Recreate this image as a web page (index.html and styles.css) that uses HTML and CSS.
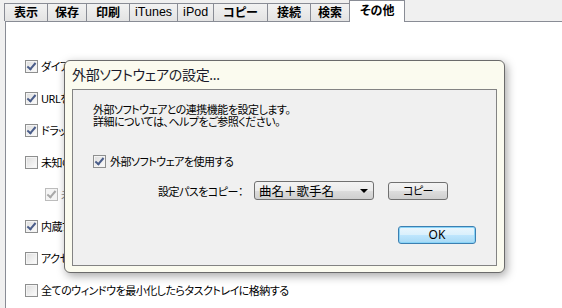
FILE: index.html
```html
<!DOCTYPE html>
<html lang="ja">

<head>
    <meta charset="UTF-8">
    <title>設定 - その他</title>
    <link rel="stylesheet" href="styles.css">
</head>

<body>
    <div class="window">
        <!-- Tab strip -->
        <div class="tabs">
            <div class="tab">表示</div>
            <div class="tab narrow">保存</div>
            <div class="tab">印刷</div>
            <div class="tab latin">iTunes</div>
            <div class="tab latin">iPod</div>
            <div class="tab">コピー</div>
            <div class="tab">接続</div>
            <div class="tab narrow">検索</div>
            <div class="tab active">その他</div>
        </div>

        <!-- Options page -->
        <div class="panel">
            <div class="row"><span class="check on"></span>ダイアログを常に手前に表示する</div>
            <div class="row"><span class="check on"></span>URLをクリックしたらブラウザで開く</div>
            <div class="row"><span class="check on"></span>ドラッグ＆ドロップで追加する</div>
            <div class="row"><span class="check"></span>未知のファイル形式も読み込む</div>
            <div class="row sub disabled"><span class="check on"></span>未対応の形式を確認する</div>
            <div class="row"><span class="check on"></span>内蔵プレーヤーで再生する</div>
            <div class="row"><span class="check"></span>アクセス履歴を保存する</div>
            <div class="row"><span class="check"></span>全てのウィンドウを最小化したらタスクトレイに格納する</div>
        </div>
    </div>

    <!-- Modal dialog -->
    <div class="dialog">
        <div class="dialog-title">外部ソフトウェアの設定...</div>
        <div class="dialog-body">
            <p class="intro">外部ソフトウェアとの連携機能を設定します。<br>詳細については、ヘルプをご参照ください。</p>
            <div class="use-row"><span class="check on"></span>外部ソフトウェアを使用する</div>
            <div class="path-row">
                <span class="path-label">設定パスをコピー：</span>
                <div class="combo">
                    <span>曲名＋歌手名</span>
                    <span class="arrow"></span>
                </div>
                <button class="btn">コピー</button>
            </div>
            <div class="ok-row">
                <button class="btn default">OK</button>
            </div>
        </div>
    </div>
</body>

</html>
```

FILE: styles.css
```css
/* General Styles */
body {
    margin: 0;
    width: 562px;
    height: 308px;
    overflow: hidden;
    background: #f0f0f0;
    font-family: "Noto Sans", "Noto Sans CJK JP", sans-serif;
    font-size: 11px;
    letter-spacing: -0.5px;
    font-feature-settings: "palt";
    color: #000;
    position: relative;
}

.window {
    height: 100%;
    display: flex;
    flex-direction: column;
}

/* Tabs */
.tabs {
    display: flex;
    align-items: flex-end;
    height: 21px;
    padding-left: 4px;
}

.tab {
    height: 18px;
    padding: 0 9px;
    margin-right: -1px;
    border: 1px solid #898c95;
    border-bottom: none;
    background: linear-gradient(to bottom, #f2f2f2, #e3e3e3);
    font-size: 12px;
    font-weight: bold;
    letter-spacing: 0;
    line-height: 17px;
    box-sizing: border-box;
    white-space: nowrap;
}

.tab.narrow {
    padding: 0 7px;
}

.tab.latin {
    padding: 0 5px;
    font-family: "Liberation Sans", sans-serif;
    font-weight: normal;
    font-size: 12.5px;
}

.tab.active {
    height: 22px;
    padding: 0 10px;
    margin-bottom: -1px;
    background: #fff;
    line-height: 20px;
    position: relative;
    z-index: 1;
}

.panel {
    flex: 1;
    margin-left: 5px;
    border-left: 1px solid #898c95;
    border-top: 1px solid #898c95;
    background: #fff;
    padding: 28px 0 0 19px;
}

.row {
    height: 32px;
    display: flex;
    align-items: center;
    white-space: nowrap;
}

.row.sub {
    padding-left: 20px;
}

.row.disabled {
    color: #8d8d8d;
}

/* Checkbox */
.check {
    width: 13px;
    height: 13px;
    box-sizing: border-box;
    border: 1px solid #8e8f8f;
    background: linear-gradient(135deg, #dcdcdc, #fdfdfd);
    box-shadow: inset 0 0 0 1px #f4f4f4;
    margin-right: 3px;
    flex: none;
    position: relative;
}

.check.on::after {
    content: "";
    position: absolute;
    left: 3px;
    top: 0px;
    width: 3px;
    height: 7px;
    border-right: 2px solid #4a5d8a;
    border-bottom: 2px solid #4a5d8a;
    transform: rotate(40deg);
}

.disabled .check {
    border-color: #bcbcbc;
    background: #f4f4f4;
}

.disabled .check.on::after {
    border-color: #a8a8a8;
}

/* Dialog */
.dialog {
    position: absolute;
    left: 64px;
    top: 60px;
    width: 441px;
    height: 213px;
    box-sizing: border-box;
    border: 1px solid #6b6b6b;
    border-radius: 6px;
    background: #fbfbef;
    box-shadow: 2px 3px 10px rgba(0, 0, 0, 0.35);
    padding: 0 7px 6px 7px;
    display: flex;
    flex-direction: column;
}

.dialog-title {
    height: 28px;
    font-size: 14px;
    letter-spacing: -0.3px;
    line-height: 27px;
    color: #1a1a2a;
}

.dialog-body {
    flex: 1;
    border: 1px solid #838383;
    background: #f0f0f0;
    padding: 14px 20px 0 20px;
}

.intro {
    margin: 0;
    line-height: 12px;
}

.use-row {
    margin-top: 26px;
    height: 14px;
    display: flex;
    align-items: center;
}

.use-row .check {
    margin-right: 4px;
}

.path-row {
    margin-top: 13px;
    display: flex;
    align-items: center;
    padding-left: 65px;
}

.path-label {
    width: 96px;
    flex: none;
    white-space: nowrap;
}

.combo {
    width: 120px;
    height: 19px;
    flex: none;
    box-sizing: border-box;
    border: 1px solid #707070;
    border-radius: 3px;
    background: linear-gradient(to bottom, #f3f3f3 0%, #ebebeb 50%, #dddddd 51%, #cfcfcf 100%);
    display: flex;
    align-items: center;
    justify-content: space-between;
    padding: 0 5px 0 4px;
    font-size: 12.5px;
    letter-spacing: 0;
}

.arrow {
    width: 0;
    height: 0;
    border-left: 4px solid transparent;
    border-right: 4px solid transparent;
    border-top: 4px solid #000;
}

.btn {
    height: 18px;
    width: 60px;
    flex: none;
    box-sizing: border-box;
    border: 1px solid #707070;
    border-radius: 3px;
    background: linear-gradient(to bottom, #f3f3f3 0%, #ebebeb 50%, #dddddd 51%, #cfcfcf 100%);
    font-family: inherit;
    font-size: 11px;
    letter-spacing: -0.5px;
    font-feature-settings: "palt";
    line-height: 14px;
    padding: 0;
    color: #000;
}

.path-row .btn {
    margin-left: 14px;
}

.ok-row {
    margin-top: 26px;
    display: flex;
    justify-content: flex-end;
}

.btn.default {
    width: 78px;
    border-color: #3c7fb1;
    background: linear-gradient(to bottom, #eaf6fd 0%, #d9f0fc 50%, #bee6fd 51%, #a7d9f5 100%);
    box-shadow: inset 0 0 0 1px #8ad4f7;
    font-size: 12px;
    letter-spacing: 0;
}
```
